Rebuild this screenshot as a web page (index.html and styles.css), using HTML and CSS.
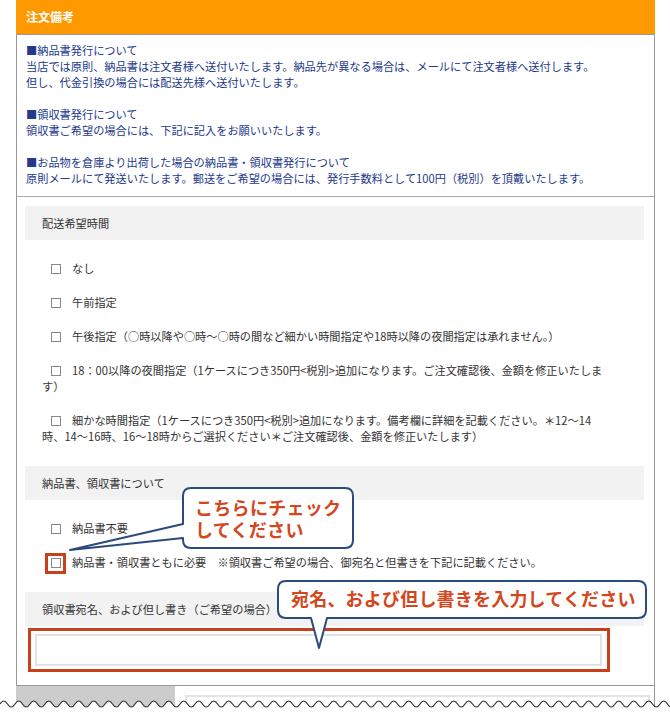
FILE: index.html
```html
<!DOCTYPE html>
<html lang="ja">
<head>
<meta charset="utf-8">
<title>注文備考</title>
<link rel="stylesheet" href="styles.css">
</head>
<body>
<div class="page">
  <div class="box">
    <div class="box-head">注文備考</div>
    <div class="notice">■納品書発行について<br>当店では原則、納品書は注文者様へ送付いたします。納品先が異なる場合は、メールにて注文者様へ送付します。<br>但し、代金引換の場合には配送先様へ送付いたします。<br><br>■領収書発行について<br>領収書ご希望の場合には、下記に記入をお願いいたします。<br><br>■お品物を倉庫より出荷した場合の納品書・領収書発行について<br>原則メールにて発送いたします。郵送をご希望の場合には、発行手数料として100円（税別）を頂戴いたします。</div>
    <div class="form">
      <div class="bar">配送希望時間</div>
      <ul class="opts">
        <li class="opt"><span class="cb"></span>なし</li>
        <li class="opt"><span class="cb"></span>午前指定</li>
        <li class="opt"><span class="cb"></span>午後指定（○時以降や○時～○時の間など細かい時間指定や18時以降の夜間指定は承れません。）</li>
        <li class="opt"><span class="cb"></span>18：00以降の夜間指定（1ケースにつき350円&lt;税別&gt;追加になります。ご注文確認後、金額を修正いたしま<br>す）</li>
        <li class="opt"><span class="cb"></span>細かな時間指定（1ケースにつき350円&lt;税別&gt;追加になります。備考欄に詳細を記載ください。＊12～14<br>時、14～16時、16～18時からご選択ください＊ご注文確認後、金額を修正いたします）</li>
      </ul>
      <div class="bar">納品書、領収書について</div>
      <ul class="opts">
        <li class="opt"><span class="cb"></span>納品書不要</li>
        <li class="opt"><span class="cb"></span>納品書・領収書ともに必要　※領収書ご希望の場合、御宛名と但書きを下記に記載ください。</li>
      </ul>
      <div class="bar">領収書宛名、および但し書き（ご希望の場合）</div>
      <div class="field"><div class="text-input"></div></div>
    </div>
  </div>
  <div class="next-row">
    <div class="next-label"></div>
    <div class="next-cell"><div class="next-input"></div></div>
  </div>

  <div class="mark mark-cb"></div>
  <div class="mark mark-input"></div>

  <svg class="callouts" width="670" height="718" viewBox="0 0 670 718">
    <path d="M191,488 H345 Q353,488 353,496 V540 Q353,548 345,548 H191 Q183,548 183,540 V538 L70,550 L183,524 V496 Q183,488 191,488 Z" fill="#fff" stroke="#2b4a7e" stroke-width="2" stroke-linejoin="round"/>
    <path d="M286,581 H638 Q646,581 646,589 V610 Q646,618 638,618 H327 L319,648 L311,618 H286 Q278,618 278,610 V589 Q278,581 286,581 Z" fill="#fff" stroke="#2b4a7e" stroke-width="2" stroke-linejoin="round"/>
  </svg>
  <div class="call call1">こちらにチェック<br>してください</div>
  <div class="call call2">宛名、および但し書きを入力してください</div>

  <svg class="wave" width="670" height="28" viewBox="0 0 670 28">
    <path d="M0,14 q3.75,-6 7.5,0 t7.5,0t7.5,0t7.5,0t7.5,0t7.5,0t7.5,0t7.5,0t7.5,0t7.5,0t7.5,0t7.5,0t7.5,0t7.5,0t7.5,0t7.5,0t7.5,0t7.5,0t7.5,0t7.5,0t7.5,0t7.5,0t7.5,0t7.5,0t7.5,0t7.5,0t7.5,0t7.5,0t7.5,0t7.5,0t7.5,0t7.5,0t7.5,0t7.5,0t7.5,0t7.5,0t7.5,0t7.5,0t7.5,0t7.5,0t7.5,0t7.5,0t7.5,0t7.5,0t7.5,0t7.5,0t7.5,0t7.5,0t7.5,0t7.5,0t7.5,0t7.5,0t7.5,0t7.5,0t7.5,0t7.5,0t7.5,0t7.5,0t7.5,0t7.5,0t7.5,0t7.5,0t7.5,0t7.5,0t7.5,0t7.5,0t7.5,0t7.5,0t7.5,0t7.5,0t7.5,0t7.5,0t7.5,0t7.5,0t7.5,0t7.5,0t7.5,0t7.5,0t7.5,0t7.5,0t7.5,0t7.5,0t7.5,0t7.5,0t7.5,0t7.5,0t7.5,0t7.5,0t7.5,0t7.5,0t7.5,0t7.5,0t7.5,0 V28 H0 Z" fill="#fff"/>
    <path d="M0,14 q3.75,-6 7.5,0 t7.5,0t7.5,0t7.5,0t7.5,0t7.5,0t7.5,0t7.5,0t7.5,0t7.5,0t7.5,0t7.5,0t7.5,0t7.5,0t7.5,0t7.5,0t7.5,0t7.5,0t7.5,0t7.5,0t7.5,0t7.5,0t7.5,0t7.5,0t7.5,0t7.5,0t7.5,0t7.5,0t7.5,0t7.5,0t7.5,0t7.5,0t7.5,0t7.5,0t7.5,0t7.5,0t7.5,0t7.5,0t7.5,0t7.5,0t7.5,0t7.5,0t7.5,0t7.5,0t7.5,0t7.5,0t7.5,0t7.5,0t7.5,0t7.5,0t7.5,0t7.5,0t7.5,0t7.5,0t7.5,0t7.5,0t7.5,0t7.5,0t7.5,0t7.5,0t7.5,0t7.5,0t7.5,0t7.5,0t7.5,0t7.5,0t7.5,0t7.5,0t7.5,0t7.5,0t7.5,0t7.5,0t7.5,0t7.5,0t7.5,0t7.5,0t7.5,0t7.5,0t7.5,0t7.5,0t7.5,0t7.5,0t7.5,0t7.5,0t7.5,0t7.5,0t7.5,0t7.5,0t7.5,0t7.5,0t7.5,0" fill="none" stroke="#333" stroke-width="1.2"/>
  </svg>
</div>
</body>
</html>
```

FILE: styles.css
```css
html, body {
  margin: 0;
  padding: 0;
  background: #fff;
}

.page {
  position: relative;
  width: 670px;
  height: 718px;
  overflow: hidden;
  font-family: "Noto Sans CJK JP", "Noto Sans", sans-serif;
  font-size: 11.2px;
  color: #333;
}

.box {
  margin-left: 16px;
  width: 637px;
  border: 1px solid #999;
  border-top: none;
}

.box-head {
  margin: 0 -1px;
  height: 34px;
  line-height: 34px;
  padding-left: 10px;
  background: #ff9900;
  color: #fff;
  font-size: 12px;
  font-weight: bold;
  border-bottom: 1px solid #999;
}

.notice {
  padding: 7px 9px 10px;
  line-height: 16px;
  color: #22398c;
  border-bottom: 1px solid #aaa;
}

.form {
  padding: 9px 10px 0 8px;
}

.bar {
  height: 34px;
  line-height: 34px;
  padding-left: 17px;
  background: #f2f2f2;
  color: #333;
}

.opts {
  list-style: none;
  margin: 0;
  padding: 20px 16px 22px 17px;
  display: flex;
  flex-direction: column;
  align-items: flex-start;
  gap: 18px;
}

.opt {
  line-height: 16px;
}

.cb {
  display: inline-block;
  width: 8px;
  height: 8px;
  border: 1px solid #888;
  margin: 0 11px 0 9px;
  vertical-align: -1px;
  background: #fff;
}

.field {
  padding: 8px 0 19px 10px;
}

.text-input {
  width: 563px;
  height: 28px;
  border: 2px solid #e2e2e2;
  background: #fff;
}

.next-row {
  display: flex;
  margin-left: 16px;
  width: 639px;
  height: 40px;
}

.next-label {
  width: 159px;
  background: #cccccc;
}

.next-cell {
  flex: 1;
  border-right: 1px solid #999;
  padding: 9px 4px 0 10px;
}

.next-input {
  height: 30px;
  border: 2px solid #e4e4e4;
}

.mark {
  position: absolute;
  border: 3px solid #c8401a;
}

.mark-cb {
  left: 45px;
  top: 553px;
  width: 15px;
  height: 15px;
}

.mark-input {
  left: 28px;
  top: 628px;
  width: 576px;
  height: 38px;
}

.callouts {
  position: absolute;
  left: 0;
  top: 0;
}

.call {
  position: absolute;
  font-size: 18px;
  line-height: 22px;
  font-weight: bold;
  color: #d4461c;
  white-space: nowrap;
}

.call1 {
  left: 195px;
  top: 496px;
  letter-spacing: 0.3px;
}

.call2 {
  left: 291px;
  top: 587px;
  letter-spacing: 0.2px;
}

.wave {
  position: absolute;
  left: 0;
  top: 690px;
}
```
